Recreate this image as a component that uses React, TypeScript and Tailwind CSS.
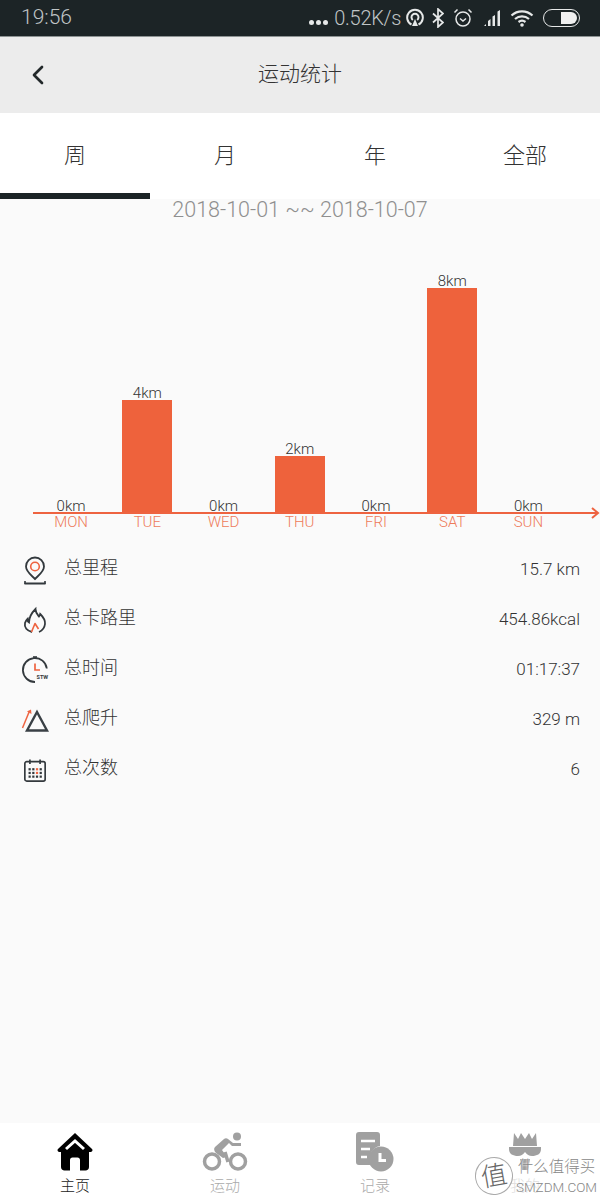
import { ChevronLeft } from "lucide-react"

const font = { fontFamily: 'Roboto, "Noto Sans CJK SC", sans-serif' }

const bars = [
  { day: "MON", km: 0 },
  { day: "TUE", km: 4 },
  { day: "WED", km: 0 },
  { day: "THU", km: 2 },
  { day: "FRI", km: 0 },
  { day: "SAT", km: 8 },
  { day: "SUN", km: 0 },
]

function PinIcon() {
  return (
    <svg width="26" height="30" viewBox="0 0 26 30" fill="none">
      <path d="M13 2.500a9 9 0 0 0-9 9c0 5 5 8.500 9 12.500 4-4 9-7.500 9-12.500a9 9 0 0 0-9-9z" stroke="#33393d" strokeWidth="1.800" />
      <circle cx="13" cy="11.500" r="4.300" stroke="#ee6340" strokeWidth="1.600" />
      <path d="M3 28.500h20" stroke="#33393d" strokeWidth="1.800" strokeLinecap="round" />
      <path d="M3 26v2.500M23 26v2.500" stroke="#33393d" strokeWidth="1.600" />
    </svg>
  )
}

function FlameIcon() {
  return (
    <svg width="26" height="30" viewBox="0 0 26 30" fill="none">
      <path d="M10 27C5 26 2 22.500 3 18c.5-2 1.500-3 2.500-4 0 2 .5 3 1.500 3.500C7 12.500 9.500 8 13.500 4c0 3.500 1.500 5 3.500 7.500.7-.8 1-1.500 1.200-2.500 3 3 5.300 6 4.800 10-.4 3.500-2.500 6.500-6 8" stroke="#33393d" strokeWidth="1.800" />
      <path d="M9.500 27l3.500-8.500 3.500 5.500" stroke="#ee6340" strokeWidth="1.600" strokeLinejoin="round" />
    </svg>
  )
}

function TimerIcon() {
  return (
    <svg width="28" height="28" viewBox="0 0 28 28" fill="none">
      <path d="M25.800 12.500A12 12 0 1 0 14 26" stroke="#33393d" strokeWidth="1.800" />
      <path d="M12 1h4" stroke="#33393d" strokeWidth="1.600" />
      <path d="M14 7.500V14h5" stroke="#ee6340" strokeWidth="1.700" />
      <text x="15.500" y="23" fontSize="5.500" fontWeight="700" fill="#33393d" style={font}>STW</text>
    </svg>
  )
}

function ClimbIcon() {
  return (
    <svg width="28" height="26" viewBox="0 0 28 26" fill="none">
      <path d="M16 5L26 23.500H6z" stroke="#3a4045" strokeWidth="2.400" strokeLinejoin="miter" />
      <path d="M1.500 21L8.500 4" stroke="#ee6340" strokeWidth="1.500" />
      <path d="M6 4.500l4-2 .5 4.500z" fill="#ee6340" />
    </svg>
  )
}

function CalendarIcon() {
  const dots = [
    [9, 12], [13, 12], [17, 12], [21, 12],
    [9, 16], [13, 16], [17, 16], [21, 16],
    [9, 20], [13, 20], [17, 20], [21, 20],
  ]
  return (
    <svg width="24" height="24" viewBox="0 0 26 26" fill="none">
      <rect x="2" y="4" width="22" height="21" rx="2" stroke="#33393d" strokeWidth="1.800" />
      <path d="M7.500 1.500v5M18.500 1.500v5" stroke="#33393d" strokeWidth="1.800" />
      {dots.map(([x, y], i) => (
        <rect key={i} x={x - 3} y={y - 1} width="2.400" height="2.400" fill={i === 6 || i === 2 ? "#ee6340" : "#33393d"} />
      ))}
    </svg>
  )
}

const stats = [
  { label: "总里程", value: "15.7 km", icon: <PinIcon /> },
  { label: "总卡路里", value: "454.86kcal", icon: <FlameIcon /> },
  { label: "总时间", value: "01:17:37", icon: <TimerIcon /> },
  { label: "总爬升", value: "329 m", icon: <ClimbIcon /> },
  { label: "总次数", value: "6", icon: <CalendarIcon /> },
]

function HomeIcon() {
  return (
    <svg width="36" height="40" viewBox="0 0 36 40" fill="#000">
      <path d="M18 1L1 17c-1.200 1.500 0 3 2 3h1v15c0 2 1.500 3.500 3.500 3.500H13V28c0-1.500 1-2.500 2.500-2.500h5c1.500 0 2.500 1 2.500 2.500v10.500h5.500c2 0 3.500-1.500 3.500-3.500V20h1c2 0 3.200-1.500 2-3z" />
      <path d="M9 17l9-8 9 8" fill="none" stroke="#fff" strokeWidth="3" />
    </svg>
  )
}

function BikeIcon() {
  return (
    <svg width="46" height="40" viewBox="0 0 46 40" fill="none">
      <circle cx="35" cy="4.500" r="4" fill="#a0a0a0" />
      <circle cx="10" cy="29.500" r="7.500" stroke="#a0a0a0" strokeWidth="3.500" />
      <circle cx="36" cy="29.500" r="7.500" stroke="#a0a0a0" strokeWidth="3.500" />
      <path d="M14 21l7 5 4-1-5-7 7-7 3 3h9v-3h-8l-5-4c-1-1-3-1-4 0l-9 8c-1.500 1.500-1 4 1 6z" fill="#a0a0a0" />
      <path d="M23 20l3 10" stroke="#a0a0a0" strokeWidth="3.500" />
    </svg>
  )
}

function RecordIcon() {
  return (
    <svg width="38" height="40" viewBox="0 0 38 40" fill="none">
      <path d="M3 0h18c2 0 3 1 3 3v11c-6 1-10 6-10 12 0 3 1 5 2 7H3c-2 0-3-1-3-3V3c0-2 1-3 3-3z" fill="#a0a0a0" />
      <path d="M5 9h14M5 17h9M5 25h6" stroke="#fff" strokeWidth="2.500" />
      <circle cx="25" cy="27" r="12.500" fill="#a0a0a0" />
      <path d="M24 21v7.500h6" stroke="#fff" strokeWidth="3" />
    </svg>
  )
}

function MeIcon() {
  return (
    <svg width="32" height="40" viewBox="0 0 32 40" fill="#a0a0a0">
      <path d="M5 1l4 6 3-6 4 6 4-6 3 6 4-6 1 13H4z" />
      <path d="M0 15h32v2c0 5-4 7-9 7-3 0-5-1.500-7-4-2 2.500-4 4-7 4-5 0-9-2-9-7z" />
      <path d="M11 27h10l-2 11h-6z" />
    </svg>
  )
}

const navItems = [
  { label: "主页", icon: <HomeIcon />, color: "text-[#222]" },
  { label: "运动", icon: <BikeIcon />, color: "text-[#aaa]" },
  { label: "记录", icon: <RecordIcon />, color: "text-[#aaa]" },
  { label: "我的", icon: <MeIcon />, color: "text-[#ddd]" },
]

function StatusBar() {
  return (
    <div className="flex h-9 items-center justify-between bg-[#1c2426] pl-[21px] pr-[20px] text-[#c0c5c6]">
      <span className="text-[21px] font-light">19:56</span>
      <div className="flex items-center">
        <div className="mt-[8px] flex gap-[2px]">
          <span className="h-[5px] w-[5px] rounded-full bg-[#e6e8e8]" />
          <span className="h-[5px] w-[5px] rounded-full bg-[#e6e8e8]" />
          <span className="h-[5px] w-[5px] rounded-full bg-[#e6e8e8]" />
        </div>
        <span className="ml-[6px] text-[20px] font-light tracking-[-0.3px]">0.52K/s</span>
        <svg width="18" height="20" viewBox="0 0 18 20" fill="none" stroke="#e6e8e8" strokeWidth="2" className="ml-[5px]">
          <path d="M5.500 16.500a7.800 7.800 0 1 1 7 0" />
          <path d="M6.800 12a3.500 3.500 0 1 1 4.400 0" />
          <path d="M9 11l-3 7h6z" fill="#e6e8e8" stroke="none" />
        </svg>
        <svg width="12" height="20" viewBox="0 0 12 20" fill="none" stroke="#e6e8e8" strokeWidth="1.700" className="ml-[8px]">
          <path d="M1 5.500l10 9-5 4.500V1l5 4.500-10 9" />
        </svg>
        <svg width="20" height="20" viewBox="0 0 20 20" fill="none" stroke="#e6e8e8" strokeWidth="1.500" className="ml-[9px]">
          <circle cx="10" cy="11" r="7" />
          <path d="M7 10.500l3 2.500 3-2.500M1.500 4.500l3-3M18.500 4.500l-3-3" />
        </svg>
        <svg width="18" height="18" viewBox="0 0 18 18" fill="#e6e8e8" className="ml-[10px]">
          <path d="M1 17l2-2v2zM5 17v-5l2.500-2v7zM9.500 17V7.500L12 6v11zM14.500 17V2.500L17 1v16z" />
        </svg>
        <svg width="24" height="18" viewBox="0 0 24 18" fill="none" stroke="#e6e8e8" strokeWidth="2.200" className="ml-[9px]">
          <path d="M1.500 6.500c6-5.500 15-5.500 21 0M5 10c4-3.500 10-3.500 14 0M8.500 13c2-1.500 5-1.500 7 0" />
          <circle cx="12" cy="16" r="1.800" fill="#e6e8e8" stroke="none" />
        </svg>
        <div className="ml-[9px] flex h-[18px] w-[37px] items-center justify-end rounded-full border-[1.500px] border-[#e6e8e8] p-[2px]">
          <div className="h-[12px] w-[16px] rounded-r-full rounded-l-[2px] bg-[#f0f0f0]" />
        </div>
      </div>
    </div>
  )
}

export default function App() {
  return (
    <div style={font} className="relative flex h-[1200px] w-[600px] flex-col overflow-hidden bg-[#fafafa]">
      <StatusBar />
      <div className="h-px bg-[#8d9393]" />
      <div className="relative flex h-[76px] items-center justify-center bg-[#ececec]">
        <ChevronLeft className="absolute left-[22px] top-[22px] text-[#22282a]" size={32} strokeWidth={2} />
        <span className="text-[21px] font-light text-[#333]">运动统计</span>
      </div>

      <div className="flex h-[86px] bg-white">
        {["周", "月", "年", "全部"].map((tab, i) => (
          <div key={tab} className={`flex flex-1 items-center justify-center border-b-[6px] pt-[5px] text-[22px] font-light text-[#333] ${i === 0 ? "border-[#1c2426]" : "border-transparent"}`}>
            {tab}
          </div>
        ))}
      </div>

      <div className="flex h-[21px] items-center justify-center pt-[2px] text-[21.500px] font-light text-[#8f8f8f]">
        2018-10-01 ~~ 2018-10-07
      </div>

      {/* chart */}
      <div className="relative ml-[33px] mt-[56px] h-[234px] w-[567px]">
        <div className="flex h-[236.500px] w-[533.500px] items-end">
          {bars.map((b) => (
            <div key={b.day} className="flex flex-1 flex-col items-center">
              <span className="mb-[-1px] text-[15px] font-light leading-[16px] text-[#333]">{b.km}km</span>
              <div style={{ height: b.km * 28.100 }} className="w-[50px] bg-[#ee623c]" />
            </div>
          ))}
        </div>
        <svg width="567" height="12" viewBox="0 0 567 12" fill="none" className="absolute left-0 top-[231px]">
          <path d="M0 6h565M559 1l6 5-6 5" stroke="#ee6340" strokeWidth="2" />
        </svg>
      </div>

      <div className="ml-[33px] mt-[4px] flex w-[533.500px]">
        {bars.map((b) => (
          <span key={b.day} className="flex-1 text-center text-[15px] font-light leading-[16px] text-[#ee7a5a]">{b.day}</span>
        ))}
      </div>

      <div className="mt-[15px] flex flex-col pl-[21px] pr-[20px]">
        {stats.map((s) => (
          <div key={s.label} className="flex h-[50px] items-center">
            <div className="flex w-[28px] justify-center">{s.icon}</div>
            <span className="ml-[15px] mb-[6px] text-[18px] font-light text-[#333]">{s.label}</span>
            <span className="ml-auto text-[17px] font-light text-[#333]">{s.value}</span>
          </div>
        ))}
      </div>

      <div className="mt-auto flex h-[77px] bg-white">
        {navItems.map((n) => (
          <div key={n.label} className="flex flex-1 flex-col items-center pt-[9px]">
            <div className="flex h-[40px] items-center justify-center">{n.icon}</div>
            <span className={`mt-[4px] text-[15px] font-light leading-[20px] ${n.color}`}>{n.label}</span>
          </div>
        ))}
      </div>

      {/* watermark */}
      <div className="absolute bottom-[4px] right-[3px] flex items-center [text-shadow:0_0_2px_#fff,0_0_2px_#fff]">
        <div className="flex h-[38px] w-[38px] rotate-[-10deg] items-center justify-center rounded-full border border-[#aaa] bg-white/50 text-[26px] font-light text-[#666]">值</div>
        <div className="ml-[3px] flex flex-col items-center text-[#888]">
          <span className="text-[15.500px] font-light leading-[22px]">什么值得买</span>
          <span className="text-[13.500px] font-light leading-[18px]">SMZDM.COM</span>
        </div>
      </div>
    </div>
  )
}
